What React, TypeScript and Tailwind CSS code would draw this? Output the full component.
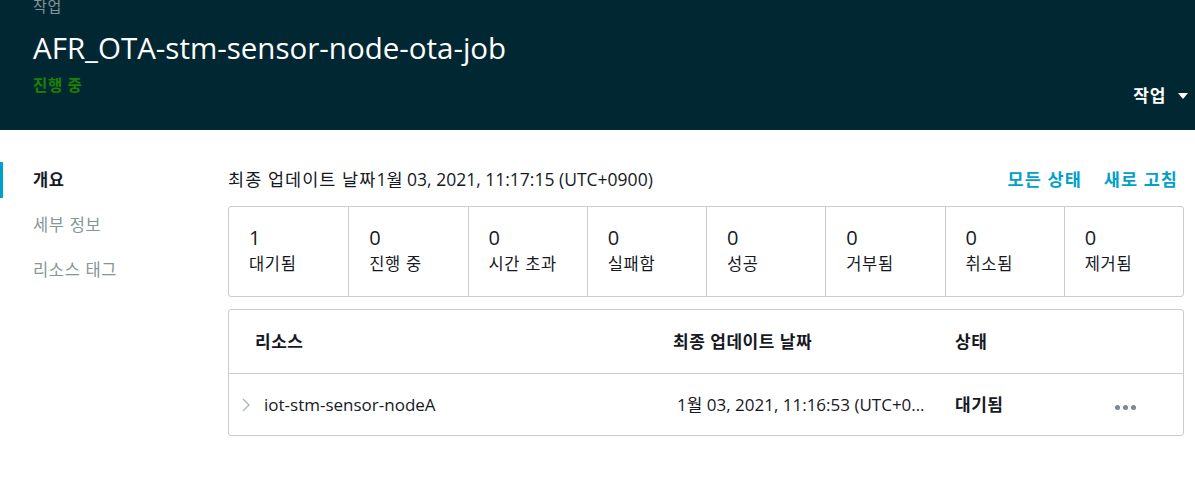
const font = {
  fontFamily: '"Open Sans", "Noto Sans CJK KR", sans-serif',
};

const counts = [
  { value: 1, label: "대기됨" },
  { value: 0, label: "진행 중" },
  { value: 0, label: "시간 초과" },
  { value: 0, label: "실패함" },
  { value: 0, label: "성공" },
  { value: 0, label: "거부됨" },
  { value: 0, label: "취소됨" },
  { value: 0, label: "제거됨" },
];

const navItems = ["개요", "세부 정보", "리소스 태그"];

const Header = () => (
  <header className="relative flex h-[130px] flex-col bg-[#012832] pl-[33px] pr-[7px]">
    <div className="-mt-[4px] text-[15px] leading-[20px] tracking-[0.04em] text-[#879596]">작업</div>
    <h1 className="mt-[13px] text-[29.5px] leading-[38px] text-white">
      AFR_OTA-stm-sensor-node-ota-job
    </h1>
    <div className="mt-[8px] text-[15.5px] font-bold leading-[20px] tracking-[0.04em] text-[#1d8102]">
      진행 중
    </div>
    <button className="absolute right-[7px] top-[83px] flex items-center gap-[12px] text-[17px] font-bold tracking-[0.04em] text-white">
      작업
      <svg width="10" height="6" viewBox="0 0 10 6">
        <path d="M0 0h10L5 6z" fill="white" />
      </svg>
    </button>
  </header>
);

const Sidebar = () => (
  <nav className="w-[228px] shrink-0 pt-[32px]">
    {navItems.map((item, i) => (
      <div
        key={item}
        className={
          i === 0
            ? "flex h-[36px] items-center border-l-[3px] border-[#00a1c9] pl-[30px] text-[16.5px] font-bold tracking-[0.04em] text-[#16191f]"
            : "mt-[9px] flex h-[36px] items-center pl-[33px] text-[16.5px] tracking-[0.04em] text-[#879596]"
        }
      >
        {item}
      </div>
    ))}
  </nav>
);

const Summary = () => (
  <div className="mt-[14px] grid h-[91px] grid-cols-8 rounded-[3px] border border-[#cccccc]">
    {counts.map((c, i) => (
      <div
        key={c.label}
        className={
          "px-[20px] pt-[19px] " + (i > 0 ? "border-l border-[#cccccc]" : "")
        }
      >
        <div className="text-[20px] leading-[24px] text-[#16191f]">{c.value}</div>
        <div className="mt-[3px] text-[16.5px] leading-[22px] tracking-[0.04em] text-[#16191f]">{c.label}</div>
      </div>
    ))}
  </div>
);

const ResourceTable = () => (
  <div className="mt-[12px] rounded-[3px] border border-[#cccccc]">
    <div className="flex h-[64px] items-center border-b border-[#cccccc] text-[17px] font-bold tracking-[0.03em] text-[#16191f]">
      <div className="w-[444px] pl-[26px]">리소스</div>
      <div className="w-[282px]">최종 업데이트 날짜</div>
      <div>상태</div>
    </div>
    <div className="flex h-[61px] items-center text-[17px] text-[#16191f]">
      <div className="flex w-[448px] items-center pl-[13px]">
        <svg width="8" height="14" viewBox="0 0 8 14" className="mr-[14px]">
          <path d="M1 1l6 6-6 6" fill="none" stroke="#aab7b8" strokeWidth="1.3" />
        </svg>
        iot-stm-sensor-nodeA
      </div>
      <div className="mr-[26px] w-[252px] truncate">1월 03, 2021, 11:16:53 (UTC+0900)</div>
      <div className="w-[160px] font-bold tracking-[0.03em]">대기됨</div>
      <div className="flex gap-[3px] pt-[6px]">
        <span className="h-[5px] w-[5px] rounded-full bg-[#7d8792]" />
        <span className="h-[5px] w-[5px] rounded-full bg-[#7d8792]" />
        <span className="h-[5px] w-[5px] rounded-full bg-[#7d8792]" />
      </div>
    </div>
  </div>
);

export default function App() {
  return (
    <div className="h-[480px] w-[1195px] overflow-hidden bg-white" style={font}>
      <Header />
      <div className="flex">
        <Sidebar />
        <main className="w-[956px] pt-[36px]">
          <div className="flex items-center justify-between">
            <div className="text-[17.5px] leading-[26px] text-[#16191f]">
              <span className="tracking-[0.06em]">최종 업데이트 날짜</span>1월 03, 2021, 11:17:15 (UTC+0900)
            </div>
            <div className="flex gap-[22px] pr-[6px] text-[17.5px] font-bold tracking-[0.06em] text-[#00a1c9]">
              <span>모든 상태</span>
              <span>새로 고침</span>
            </div>
          </div>
          <Summary />
          <ResourceTable />
        </main>
      </div>
    </div>
  );
}
